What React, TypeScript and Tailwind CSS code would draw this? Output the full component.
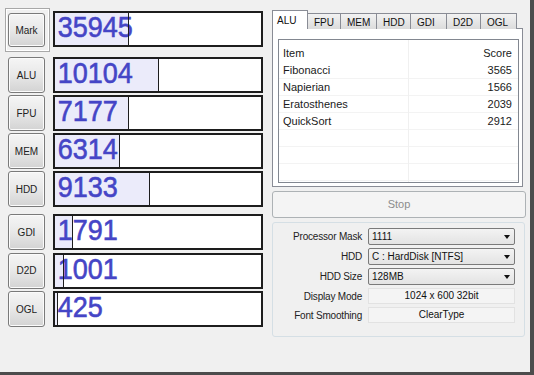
const font = "font-['Liberation_Sans',Arial,sans-serif]";

const group1 = [
  { label: "ALU", value: "10104", line: 103 },
  { label: "FPU", value: "7177", line: 73 },
  { label: "MEM", value: "6314", line: 64 },
  { label: "HDD", value: "9133", line: 94 },
];

const group2 = [
  { label: "GDI", value: "1791", line: 17 },
  { label: "D2D", value: "1001", line: 8 },
  { label: "OGL", value: "425", line: 2 },
];

const tabs = [
  { name: "ALU", w: 36 },
  { name: "FPU", w: 33 },
  { name: "MEM", w: 36 },
  { name: "HDD", w: 34 },
  { name: "GDI", w: 36 },
  { name: "D2D", w: 34 },
  { name: "OGL", w: 36 },
];

const scores = [
  ["Fibonacci", "3565"],
  ["Napierian", "1566"],
  ["Eratosthenes", "2039"],
  ["QuickSort", "2912"],
  ["", ""],
  ["", ""],
  ["", ""],
];

function WinButton({ label, h }: { label: string; h: string }) {
  return (
    <div
      className={`w-[37px] ${h} rounded-[3px] border border-[#7a7a7a] bg-linear-to-b from-[#f5f5f5] via-[#e8e8e8] to-[#d3d3d3] shadow-[inset_0_0_0_1px_#fbfbfb] flex items-center justify-center text-[10px] text-[#222]`}
    >
      {label}
    </div>
  );
}

function ScoreBar({ value, line }: { value: string; line: number }) {
  return (
    <div className="relative h-[36px] w-[210px] border-2 border-[#1d1d1d] bg-white overflow-hidden">
      <div className="absolute inset-y-0 left-0 bg-[#ebebfa]" style={{ width: line }} />
      <div className="relative inline-block origin-left scale-x-[0.9] pl-[3px] text-[30px] leading-[27px] text-[#4545c6] [-webkit-text-stroke:0.6px_#4545c6]">
        {value}
      </div>
      <div className="absolute inset-y-0 w-px bg-[#1d1d1d]" style={{ left: line }} />
    </div>
  );
}

function Row({ label, value, line }: { label: string; value: string; line: number }) {
  return (
    <div className="flex">
      <div className="w-[45px] pl-[3px]">
        <WinButton label={label} h="h-[36px]" />
      </div>
      <div className="ml-[3px]">
        <ScoreBar value={value} line={line} />
      </div>
    </div>
  );
}

function Combo({ text }: { text: string }) {
  return (
    <div className="relative h-[17px] w-[147px] rounded-[2px] border border-[#7a7a7a] bg-linear-to-b from-[#f3f3f3] to-[#e3e3e3] pl-[3px] text-[10px] leading-[15px] text-[#111]">
      {text}
      <span className="absolute right-[4px] top-[6px] h-0 w-0 border-x-[3px] border-t-[4px] border-x-transparent border-t-[#111]" />
    </div>
  );
}

function Field({ text }: { text: string }) {
  return (
    <div className="h-[16px] w-[147px] border border-[#e2e2e2] bg-[#f4f4f4] text-center text-[10px] leading-[14px] text-[#111]">
      {text}
    </div>
  );
}

function Setting({ label, children }: { label: string; children: React.ReactNode }) {
  return (
    <div className="flex items-center">
      <div className="w-[95px] pr-[6px] text-right text-[10px] text-[#222] tracking-[-0.2px]">{label}</div>
      {children}
    </div>
  );
}

export default function App() {
  return (
    <div className={`w-[534px] h-[375px] bg-[#f0f0f0] border-r-[4px] border-b-[3px] border-[#4c4c4c] ${font}`}>
      <div className="flex pl-[5px]">
        {/* left: score bars */}
        <div className="w-[258px] pt-[8px]">
          <div className="flex">
            <div className="h-[44px] w-[45px] border border-[#a8a8a8] shadow-[inset_0_0_0_1px_#ffffff] pl-[2px] pt-[4px]">
              <WinButton label="Mark" h="h-[34px]" />
            </div>
            <div className="ml-[3px] mt-[3px]">
              <ScoreBar value="35945" line={73} />
            </div>
          </div>
          <div className="mt-[5px] flex flex-col gap-[2px]">
            {group1.map((r) => (
              <Row key={r.label} {...r} />
            ))}
          </div>
          <div className="mt-[7px] flex flex-col gap-[2.5px]">
            {group2.map((r) => (
              <Row key={r.label} {...r} />
            ))}
          </div>
        </div>

        {/* right: details */}
        <div className="ml-[9px] w-[254px] pt-[10px]">
          <div className="flex h-[19px] items-end">
            {tabs.map((t, i) =>
              i === 0 ? (
                <div
                  key={t.name}
                  className="relative z-10 h-[19px] border border-b-0 border-[#898c95] bg-white pl-[4px] pt-[2px] text-[10px] text-[#111]"
                  style={{ width: t.w }}
                >
                  {t.name}
                </div>
              ) : (
                <div
                  key={t.name}
                  className="h-[16px] border border-b-0 border-l-0 border-[#898c95] bg-linear-to-b from-[#f2f2f2] to-[#dcdcdc] pl-[6px] pt-px text-[10px] text-[#111]"
                  style={{ width: t.w }}
                >
                  {t.name}
                </div>
              )
            )}
          </div>
          <div className="-mt-px h-[159px] w-[251px] border border-[#898c95] bg-white pl-[5px] pt-[10px]">
            <div className="relative h-[144px] w-[241px] border border-[#828790] bg-white text-[11px] text-[#1a1a1a]">
              <div className="absolute bottom-0 top-0 left-[129px] w-px bg-[#f0f0f0]" />
              <div className="flex h-[22px] items-center justify-between pl-[4px] pr-[6px] pt-[4px]">
                <span>Item</span>
                <span>Score</span>
              </div>
              {scores.map(([n, s], i) => (
                <div key={i} className="flex h-[17px] items-center justify-between border-b border-[#f3f3f3] pl-[4px] pr-[6px]">
                  <span>{n}</span>
                  <span>{s}</span>
                </div>
              ))}
            </div>
          </div>
          <div className="mt-[4px] flex h-[27px] items-center justify-center rounded-[3px] border border-[#adb2b5] bg-[#f4f4f4] text-[11px] text-[#8c8c8c]">
            Stop
          </div>
          <div className="mt-[4px] flex h-[115px] w-[253px] flex-col gap-[3px] rounded-[3px] border border-[#d5dfe5] pt-[5px]">
            <Setting label="Processor Mask">
              <Combo text="1111" />
            </Setting>
            <Setting label="HDD">
              <Combo text="C : HardDisk [NTFS]" />
            </Setting>
            <Setting label="HDD Size">
              <Combo text="128MB" />
            </Setting>
            <Setting label="Display Mode">
              <Field text="1024 x 600 32bit" />
            </Setting>
            <Setting label="Font Smoothing">
              <Field text="ClearType" />
            </Setting>
          </div>
        </div>
      </div>
    </div>
  );
}
